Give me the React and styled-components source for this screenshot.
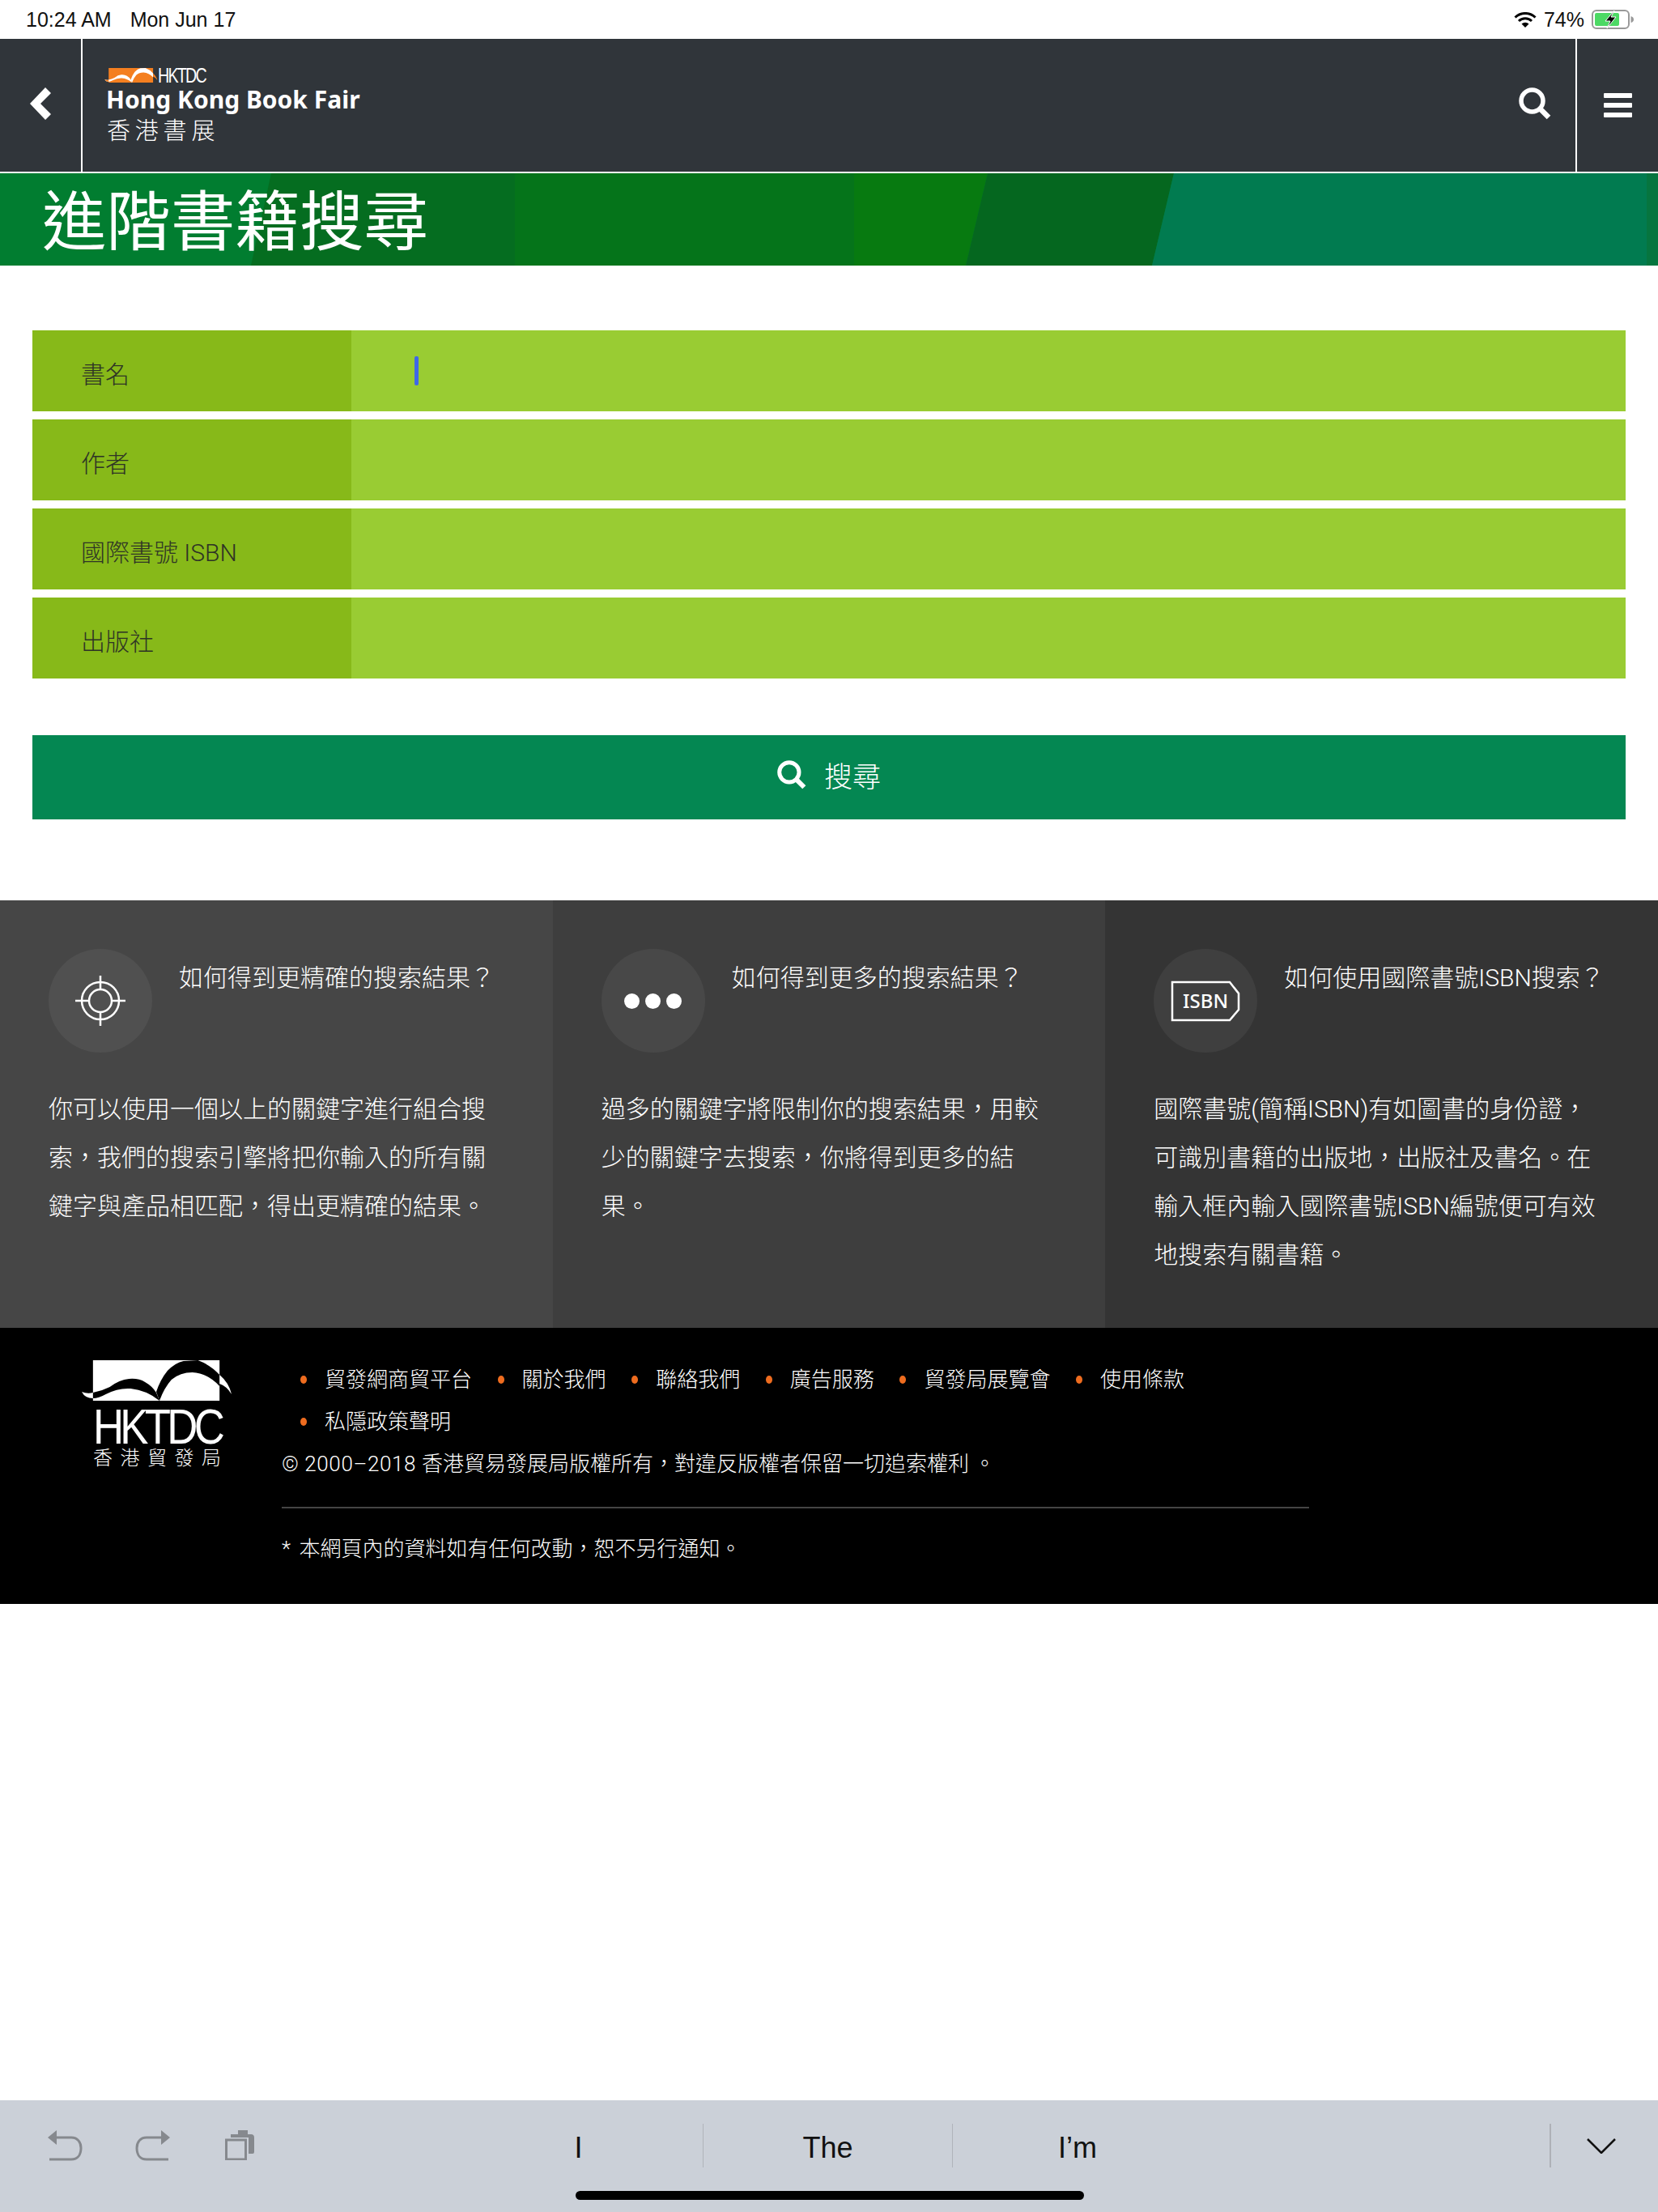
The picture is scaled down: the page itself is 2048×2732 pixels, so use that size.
import React from "react";
import styled, { createGlobalStyle } from "styled-components";

const cjk = `"Noto Sans CJK TC", "Noto Sans CJK SC", sans-serif`;
const latinCjk = `Roboto, "Noto Sans CJK TC", sans-serif`;

const Global = createGlobalStyle`
  html, body { margin: 0; padding: 0; background: #fff; }
  * { box-sizing: border-box; }
`;

const Page = styled.div`
  width: 2048px;
  min-height: 2732px;
  display: flex;
  flex-direction: column;
  font-family: ${latinCjk};
  font-weight: 300;
`;

const StatusBar = styled.div`
  height: 48px;
  display: flex;
  align-items: center;
  justify-content: space-between;
  padding: 0 30px 0 32px;
  font-family: "Liberation Sans", sans-serif;
  font-size: 25px;
  color: #111;
`;

const StatusGroup = styled.div`
  display: flex;
  align-items: center;
  gap: ${(p) => p.$gap}px;
`;

const Header = styled.header`
  height: 166px;
  display: flex;
  background: #30353a;
  border-bottom: 2px solid #fff;
  color: #fff;
`;

const NavCell = styled.div`
  display: flex;
  align-items: center;
  justify-content: center;
  width: ${(p) => p.$width}px;
  padding-bottom: ${(p) => p.$lift || 0}px;
  border-right: ${(p) => (p.$line ? "2px solid #fff" : "none")};
`;

const Brand = styled.div`
  flex: 1;
  padding: 36px 0 0 30px;
  display: flex;
  flex-direction: column;
`;

const BrandMark = styled.div`
  display: flex;
  align-items: flex-start;
  gap: 0;
  height: 18px;
  margin-left: -3px;
  svg { overflow: visible; }
`;

const BrandName = styled.div`
  margin: 1px 0 -2px -1px;
  font-family: "Noto Sans", sans-serif;
  font-weight: 700;
  font-size: 30px;
  line-height: 40px;
  white-space: nowrap;
`;

const BrandSub = styled.div`
  font-family: ${cjk};
  font-size: 29px;
  line-height: 36px;
  letter-spacing: 5.8px;
`;

const MenuBars = styled.div`
  display: flex;
  flex-direction: column;
  gap: 6px;
`;

const MenuBar = styled.span`
  display: block;
  width: 35px;
  height: 6px;
  border-radius: 1px;
  background: #fff;
`;

const Banner = styled.div`
  position: relative;
  height: 114px;
  padding-left: 52px;
  background: #017d30;
`;

const BannerArt = styled.svg`
  position: absolute;
  left: 0;
  top: 0;
`;

const BannerTitle = styled.h1`
  position: relative;
  margin: 0;
  font-family: ${cjk};
  font-size: 79.5px;
  font-weight: 400;
  line-height: 108px;
  color: #fff;
  white-space: nowrap;
`;

const Form = styled.div`
  padding: 80px 40px 100px;
  display: flex;
  flex-direction: column;
`;

const Fields = styled.div`
  display: flex;
  flex-direction: column;
  gap: 10px;
  margin-bottom: 70px;
`;

const Field = styled.div`
  height: 100px;
  display: grid;
  grid-template-columns: 394px 1fr;
  background: #99cc33;
`;

const FieldLabel = styled.div`
  display: flex;
  align-items: center;
  padding: 4px 0 0 60px;
  background: #87b919;
  color: #2e3326;
  font-size: 30px;
`;

const FieldInput = styled.div`
  display: flex;
  align-items: center;
  padding-left: 78px;
`;

const Caret = styled.span`
  width: 5px;
  height: 36px;
  border-radius: 2px;
  background: #3f68e8;
`;

const SearchButton = styled.div`
  height: 104px;
  display: flex;
  align-items: center;
  justify-content: center;
  gap: 22px;
  background: #048752;
  color: #fff;
  font-family: ${cjk};
  font-size: 35px;
  padding-bottom: 7px;
`;

const Tips = styled.section`
  display: grid;
  grid-template-columns: repeat(3, 1fr);
`;

const Tip = styled.article`
  background: ${(p) => p.$bg};
  padding: 60px 60px 60px;
  color: #fff;
`;

const TipHead = styled.div`
  display: flex;
  gap: 33px;
  margin-bottom: 40px;
`;

const TipBadge = styled.div`
  width: 128px;
  height: 128px;
  flex: none;
  display: flex;
  align-items: center;
  justify-content: center;
  gap: 7px;
  border-radius: 50%;
  background: rgba(255, 255, 255, 0.055);
`;

const Dot = styled.span`
  width: 19px;
  height: 19px;
  border-radius: 50%;
  background: #fff;
`;

const TipTitle = styled.h3`
  margin: 0;
  font-size: 30px;
  font-weight: 300;
  line-height: 72px;
  white-space: nowrap;
`;

const TipBody = styled.p`
  margin: 0;
  font-size: 30px;
  line-height: 60px;
`;

const Footer = styled.footer`
  display: flex;
  gap: 60px;
  padding: 38px 0 42px 100px;
  background: #000;
  color: #fff;
  font-size: 26px;
`;

const FooterLogo = styled.div`
  width: 188px;
  flex: none;
  padding-top: 2px;
  display: flex;
  flex-direction: column;
`;

const FooterWord = styled.div`
  margin: 9px 0 0 15px;
  height: 44px;
  svg { overflow: visible; }
`;

const FooterCjk = styled.div`
  margin: 3px 0 0 15px;
  font-family: ${cjk};
  font-size: 24px;
  line-height: 26px;
  letter-spacing: 9.5px;
  color: #fff;
  white-space: nowrap;
`;

const FooterMain = styled.div`
  width: 1269px;
`;

const LinkList = styled.ul`
  margin: 0;
  padding: 0 0 0 23px;
  list-style: none;
  display: flex;
  flex-wrap: wrap;
  column-gap: 31.6px;
`;

const LinkItem = styled.li`
  position: relative;
  padding-left: 30px;
  line-height: 52px;
  &::before {
    content: "";
    position: absolute;
    left: 0;
    top: 21px;
    width: 8px;
    height: 10px;
    border-radius: 50%;
    background: #ee6c1f;
  }
`;

const FootLine = styled.div`
  line-height: 52px;
  white-space: nowrap;
`;

const Spaced = styled.span`
  letter-spacing: ${(p) => p.$by}px;
`;

const FootRule = styled.hr`
  margin: 27px 0 24px;
  height: 2px;
  border: 0;
  background: #444;
`;

const Filler = styled.div`
  flex: 1;
`;

const KeyboardBar = styled.div`
  height: 138px;
  display: flex;
  align-items: flex-start;
  position: relative;
  background: #cbd0d8;
  color: #111;
`;

const KeyTools = styled.div`
  width: 561px;
  height: 100%;
  padding: 36px 0 0 58px;
  display: flex;
  align-items: flex-start;
`;

const KeyTool = styled.span`
  display: block;
  width: ${(p) => p.$width}px;
  flex: none;
`;

const Suggestion = styled.div`
  width: 308px;
  margin-top: 29px;
  height: 54px;
  display: flex;
  align-items: center;
  justify-content: center;
  border-right: ${(p) => (p.$line ? "1px solid #b0b4bb" : "none")};
  font-family: "Liberation Sans", sans-serif;
  font-size: 36px;
  font-weight: 400;
  padding-top: 6px;
`;

const KeyDismiss = styled.div`
  margin: 29px 0 0 429px;
  height: 54px;
  padding-left: 44px;
  display: flex;
  align-items: center;
  border-left: 2px solid #aeb1b7;
`;

const HomeIndicator = styled.span`
  position: absolute;
  left: 711px;
  top: 112px;
  width: 628px;
  height: 11px;
  border-radius: 6px;
  background: #000;
`;

// the wing shapes of the trade council logo, 190 x 50 units
const Waves = ({ paper, ink, tail, width, height }) => (
  <svg width={width} height={height} viewBox="0 0 190 50" preserveAspectRatio="none">
    <rect x="15" y="0" width="158" height="50" fill={paper} />
    <path
      d="M1 39 Q8 42 15 40 Q26 38 36 33 Q48 24 60 23 Q72 22 80 27 Q89 32 94 40 L98 50 Q82 37 62 35 Q46 34 31 42 Q22 47 15 47 Q5 47 1 39Z"
      fill={ink}
    />
    <path d="M94 39 Q99 24 108 13 Q118 3 128 1 L146 0 Q162 6 173 18 L173 32 Q158 16 139 15 Q124 15 113 24 Q104 34 98 50Z" fill={ink} />
    <path d="M1 39 Q8 42 15 40 L15 47 Q5 47 1 39Z" fill={tail} />
    <path d="M173 18 Q185 28 188 42 Q182 32 173 29Z" fill={tail} />
  </svg>
);

const Word = ({ width, height, size, baseline, color }) => (
  <svg width={width} height={height} viewBox={`0 0 ${width} ${height}`}>
    <text
      x="0"
      y={baseline}
      fontFamily="Liberation Sans, sans-serif"
      fontSize={size}
      letterSpacing={-0.09 * size}
      fill={color}
      textLength={width}
      lengthAdjust="spacingAndGlyphs"
    >
      HKTDC
    </text>
  </svg>
);

const SearchIcon = ({ size }) => (
  <svg width={size} height={size} viewBox="0 0 40 40" fill="none" stroke="#fff">
    <circle cx="16.5" cy="16.5" r="13.5" strokeWidth="5.5" />
    <path d="M26.5 26.5 L37 37" strokeWidth="6.5" />
  </svg>
);

const BackIcon = () => (
  <svg width="26" height="40" viewBox="0 0 26 40">
    <path d="M19 0 L26 7 L13 20 L26 33 L19 40 L0 20Z" fill="#fff" />
  </svg>
);

const WifiIcon = () => (
  <svg width="28" height="19" viewBox="0 0 28 19" fill="none" stroke="#000" strokeWidth="3">
    <path d="M1.5 6.5 A18 18 0 0 1 26.5 6.5" />
    <path d="M6 11 A11.5 11.5 0 0 1 22 11" />
    <path d="M14 19 L9.5 14.5 A6.5 6.5 0 0 1 18.5 14.5Z" fill="#000" stroke="none" />
  </svg>
);

const BatteryIcon = () => (
  <svg width="52" height="24" viewBox="0 0 52 24">
    <rect x="1" y="1" width="45" height="22" rx="5" fill="none" stroke="#999" strokeWidth="2" />
    <rect x="4" y="4" width="30" height="16" rx="2" fill="#4cd964" />
    <path d="M48.5 8 Q52 9 52 12 Q52 15 48.5 16Z" fill="#999" />
    <path d="M28 1 L17 14 L23 14 L19 23 L30 9 L24 9Z" fill="#000" stroke="#fff" strokeWidth="1" />
  </svg>
);

const TargetIcon = () => (
  <svg width="62" height="62" viewBox="0 0 62 62" fill="none" stroke="#fff" strokeWidth="2.5">
    <circle cx="31" cy="31" r="23" />
    <circle cx="31" cy="31" r="14" />
    <path d="M31 0 V16 M31 46 V62 M0 31 H16 M46 31 H62" />
  </svg>
);

const IsbnIcon = () => (
  <svg width="86" height="51" viewBox="0 0 86 51">
    <path d="M2 2 H73 L84 16 V36 L73 49 H2Z" fill="none" stroke="#fff" strokeWidth="2.5" />
    <text x="43" y="34" textAnchor="middle" fontFamily="Noto Sans, sans-serif" fontWeight="500" fontSize="24" fill="#fff">
      ISBN
    </text>
  </svg>
);

const UndoIcon = ({ flip }) => (
  <svg width="44" height="40" viewBox="0 0 44 40" style={flip ? { transform: "scaleX(-1)" } : undefined}>
    <path d="M1 10 L12 1 V19Z" fill="#86898e" />
    <path d="M11 10 H30 C38 10 42 16 42 23 C42 31 38 37 30 37 H3" fill="none" stroke="#86898e" strokeWidth="3" />
  </svg>
);

const PasteIcon = () => (
  <svg width="36" height="38" viewBox="0 0 36 38">
    <rect x="1.5" y="13" width="24" height="24" fill="none" stroke="#86898e" strokeWidth="3" />
    <path d="M7 10 V6 H16 V1 H28 V6 H32 A4 4 0 0 1 36 10 V28 A2 2 0 0 1 34 30 H29 V10Z" fill="#86898e" />
  </svg>
);

const ChevronDown = () => (
  <svg width="36" height="19" viewBox="0 0 36 19" fill="none" stroke="#111" strokeWidth="2.5">
    <path d="M1 1 L18 18 L35 1" />
  </svg>
);

const fields = ["書名", "作者", "國際書號 ISBN", "出版社"];

const links = ["貿發網商貿平台", "關於我們", "聯絡我們", "廣告服務", "貿發局展覽會", "使用條款", "私隱政策聲明"];

const tips = [
  {
    bg: "#464646",
    badge: <TargetIcon />,
    title: "如何得到更精確的搜索結果？",
    body: "你可以使用一個以上的關鍵字進行組合搜索，我們的搜索引擎將把你輸入的所有關鍵字與產品相匹配，得出更精確的結果。",
  },
  {
    bg: "#3e3e3e",
    badge: (
      <>
        <Dot />
        <Dot />
        <Dot />
      </>
    ),
    title: "如何得到更多的搜索結果？",
    body: "過多的關鍵字將限制你的搜索結果，用較少的關鍵字去搜索，你將得到更多的結果。",
  },
  {
    bg: "#343434",
    badge: <IsbnIcon />,
    title: "如何使用國際書號ISBN搜索？",
    body: "國際書號(簡稱ISBN)有如圖書的身份證，可識別書籍的出版地，出版社及書名。在輸入框內輸入國際書號ISBN編號便可有效地搜索有關書籍。",
  },
];

const App = () => {
  return (
    <Page>
      <Global />
      <StatusBar>
        <StatusGroup $gap={23}>
          <span>10:24 AM</span>
          <span>Mon Jun 17</span>
        </StatusGroup>
        <StatusGroup $gap={9}>
          <WifiIcon />
          <span>74%</span>
          <BatteryIcon />
        </StatusGroup>
      </StatusBar>

      <Header>
        <NavCell $width={102} $line $lift={4}>
          <BackIcon />
        </NavCell>
        <Brand>
          <BrandMark>
            <Waves paper="#f47f20" ink="#fff" tail="#f47f20" width={66} height={18} />
            <Word width={59} height={18} size={25} baseline={18} color="#fff" />
          </BrandMark>
          <BrandName>Hong Kong Book Fair</BrandName>
          <BrandSub>香港書展</BrandSub>
        </Brand>
        <NavCell $width={102} $line $lift={4}>
          <SearchIcon size={40} />
        </NavCell>
        <NavCell $width={100} $lift={1}>
          <MenuBars>
            <MenuBar />
            <MenuBar />
            <MenuBar />
          </MenuBars>
        </NavCell>
      </Header>

      <Banner>
        <BannerArt width="2048" height="114" viewBox="0 0 2048 114">
          <polygon points="335,0 636,0 636,114 310,114" fill="#056d20" />
          <rect x="636" y="0" width="420" height="114" fill="#05741a" />
          <polygon points="1055,0 1220,0 1193,114 1055,114" fill="#077a10" />
          <polygon points="1220,0 1450,0 1423,114 1193,114" fill="#05671f" />
          <polygon points="1450,0 2034,0 2034,114 1423,114" fill="#017b50" />
          <rect x="2034" y="0" width="14" height="114" fill="#06753f" />
        </BannerArt>
        <BannerTitle>進階書籍搜尋</BannerTitle>
      </Banner>

      <Form>
        <Fields>
          {fields.map((label, i) => (
            <Field key={label}>
              <FieldLabel>{label}</FieldLabel>
              <FieldInput>{i === 0 && <Caret />}</FieldInput>
            </Field>
          ))}
        </Fields>
        <SearchButton>
          <SearchIcon size={36} />
          <span>搜尋</span>
        </SearchButton>
      </Form>

      <Tips>
        {tips.map((tip) => (
          <Tip key={tip.title} $bg={tip.bg}>
            <TipHead>
              <TipBadge>{tip.badge}</TipBadge>
              <TipTitle>{tip.title}</TipTitle>
            </TipHead>
            <TipBody>{tip.body}</TipBody>
          </Tip>
        ))}
      </Tips>

      <Footer>
        <FooterLogo>
          <Waves paper="#fff" ink="#000" tail="#fff" width={188} height={50} />
          <FooterWord>
            <Word width={158} height={44} size={61} baseline={44} color="#fff" />
          </FooterWord>
          <FooterCjk>香港貿發局</FooterCjk>
        </FooterLogo>
        <FooterMain>
          <LinkList>
            {links.map((link) => (
              <LinkItem key={link}>{link}</LinkItem>
            ))}
          </LinkList>
          <FootLine>
            <Spaced $by={0.6}>© 2000–2018 </Spaced>香港貿易發展局版權所有，對違反版權者保留一切追索權利 。
          </FootLine>
          <FootRule />
          <FootLine>
            <Spaced $by={2}>* </Spaced>本網頁內的資料如有任何改動，恕不另行通知。
          </FootLine>
        </FooterMain>
      </Footer>

      <Filler />

      <KeyboardBar>
        <KeyTools>
          <KeyTool $width={109}>
            <UndoIcon />
          </KeyTool>
          <KeyTool $width={111}>
            <UndoIcon flip />
          </KeyTool>
          <KeyTool $width={36}>
            <PasteIcon />
          </KeyTool>
        </KeyTools>
        <Suggestion $line>I</Suggestion>
        <Suggestion $line>The</Suggestion>
        <Suggestion>I’m</Suggestion>
        <KeyDismiss>
          <ChevronDown />
        </KeyDismiss>
        <HomeIndicator />
      </KeyboardBar>
    </Page>
  );
};

export default App;
